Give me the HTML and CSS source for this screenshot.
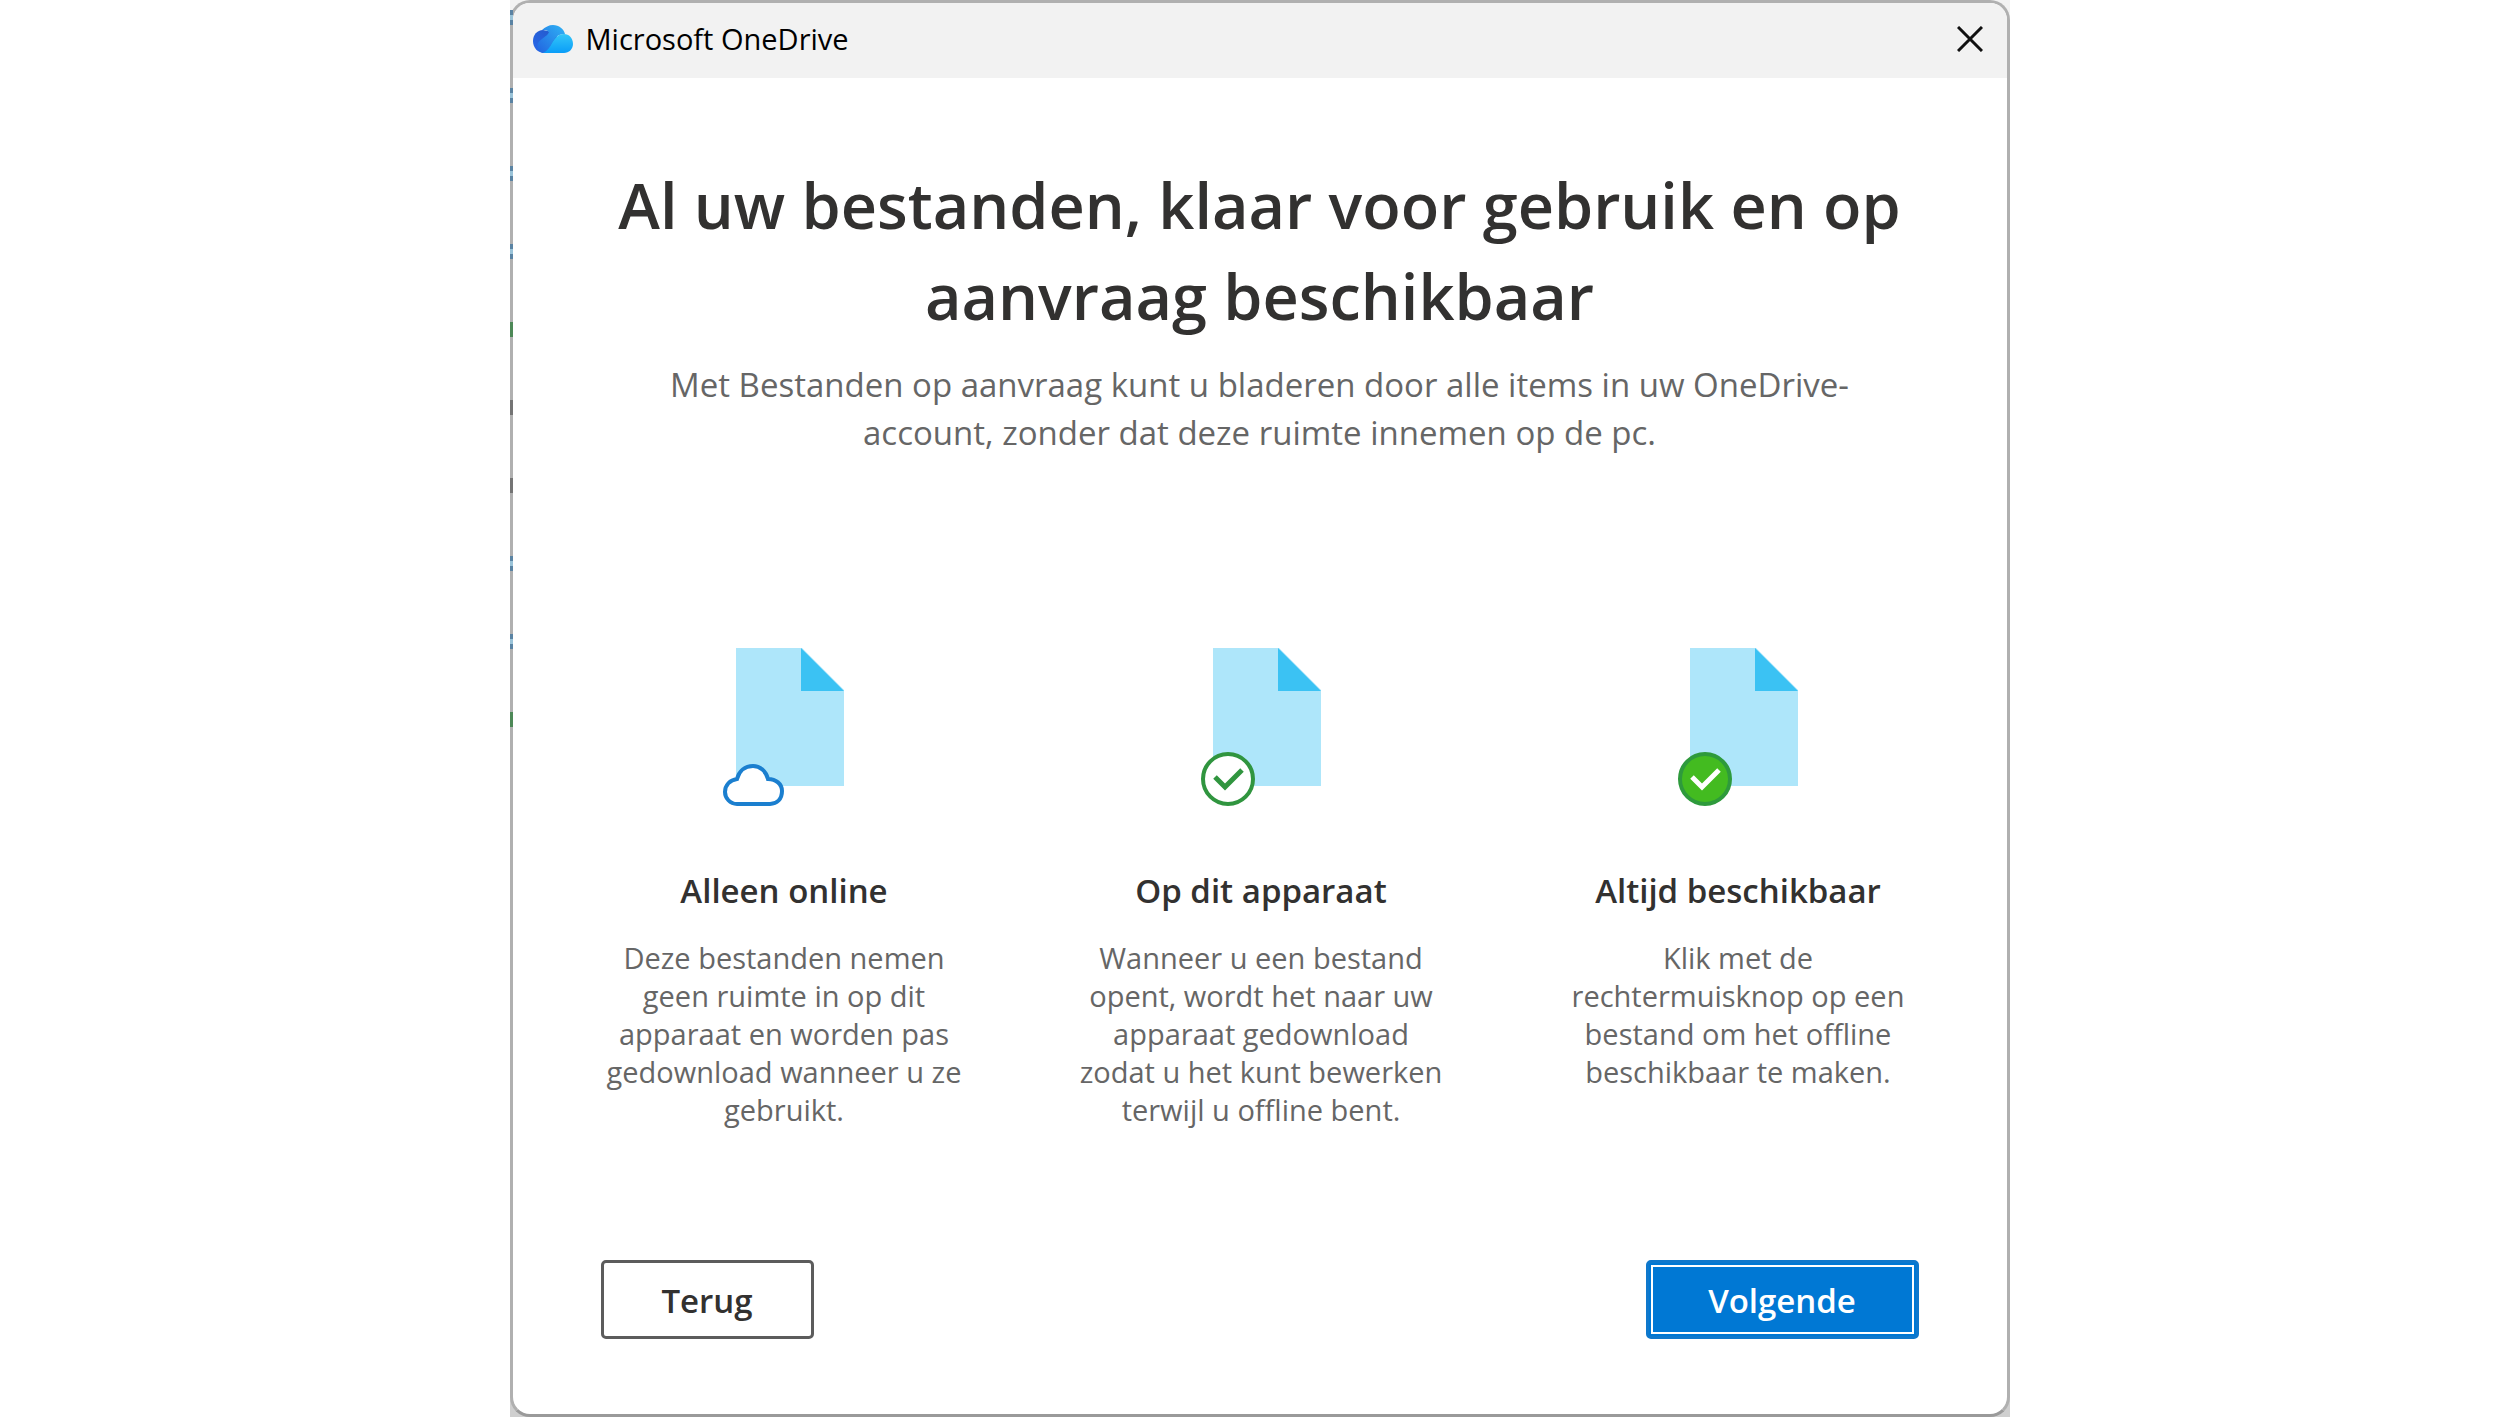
FILE: index.html
```html
<!DOCTYPE html>
<html lang="nl">
<head>
    <meta charset="UTF-8">
    <meta name="viewport" content="width=device-width, initial-scale=1.0">
    <title>Microsoft OneDrive</title>
    <link rel="stylesheet" href="styles.css">
</head>
<body>

    <div class="frame">
        <div class="window">
            <header class="titlebar">
                <svg class="logo" viewBox="0 0 40 28">
                    <defs>
                        <linearGradient id="back" x1="1" y1="0" x2="0" y2="1">
                            <stop offset="0" stop-color="#2fb4f5"/>
                            <stop offset="1" stop-color="#2263e0"/>
                        </linearGradient>
                        <linearGradient id="left" x1="1" y1="0" x2="0" y2="1">
                            <stop offset="0" stop-color="#2458c8"/>
                            <stop offset="1" stop-color="#2868ea"/>
                        </linearGradient>
                        <linearGradient id="front" x1="0" y1="0" x2="0" y2="1">
                            <stop offset="0" stop-color="#34c6f8"/>
                            <stop offset="1" stop-color="#0a9df8"/>
                        </linearGradient>
                    </defs>
                    <path fill="url(#left)" d="M10 5C4 5 0 10 0 16c0 7 5 12 11 12h12L24 8z"/>
                    <path fill="url(#back)" d="M9 5C12 2 16 0 20 0c6 0 11 4 12 9-8 0-10 4-13 9-2 4-5 8-9 10C5 26 3 22 5 18c3-5 9-6 11-11-2-2-5-2-7-2z"/>
                    <path fill="url(#front)" d="M10 28c4-2 7-6 9-10 3-5 6-9 12-9 5 0 9 4 9 10 0 5-4 9-9 9z"/>
                </svg>
                <span class="app-name">Microsoft OneDrive</span>
                <button class="close" aria-label="Sluiten">
                    <svg viewBox="0 0 26 26">
                        <path d="M1 1l24 24M25 1L1 25" fill="none" stroke="#111" stroke-width="3"/>
                    </svg>
                </button>
            </header>

            <main>
                <h1>Al uw bestanden, klaar voor gebruik en op<br>aanvraag beschikbaar</h1>
                <p class="intro">Met Bestanden op aanvraag kunt u bladeren door alle items in uw OneDrive-<br>account, zonder dat deze ruimte innemen op de pc.</p>

                <div class="options">
                    <section class="option">
                        <svg class="file" viewBox="0 0 124 162">
                            <path fill="#aee6fa" d="M14 2h66l42 42v96H14z"/>
                            <path fill="#3bc2f3" d="M79 2v43h43z"/>
                            <path fill="#fff" stroke="#1b7fcf" stroke-width="4" d="M15 158C8 158 3 152 3 146c0-7 5-12 12-13C17 125 23 120 31 120c7 0 13 5 15 13 8 0 14 5 14 12 0 8-5 13-12 13z"/>
                        </svg>
                        <h2>Alleen online</h2>
                        <p>Deze bestanden nemen<br>geen ruimte in op dit<br>apparaat en worden pas<br>gedownload wanneer u ze<br>gebruikt.</p>
                    </section>
                    <section class="option">
                        <svg class="file" viewBox="0 0 124 162">
                            <path fill="#aee6fa" d="M14 2h66l42 42v96H14z"/>
                            <path fill="#3bc2f3" d="M79 2v43h43z"/>
                            <circle cx="29" cy="133" r="25" fill="#fff" stroke="#30953f" stroke-width="4"/>
                            <path fill="none" stroke="#30953f" stroke-width="5" d="M16 131l10 10 17-17"/>
                        </svg>
                        <h2>Op dit apparaat</h2>
                        <p>Wanneer u een bestand<br>opent, wordt het naar uw<br>apparaat gedownload<br>zodat u het kunt bewerken<br>terwijl u offline bent.</p>
                    </section>
                    <section class="option">
                        <svg class="file" viewBox="0 0 124 162">
                            <path fill="#aee6fa" d="M14 2h66l42 42v96H14z"/>
                            <path fill="#3bc2f3" d="M79 2v43h43z"/>
                            <circle cx="29" cy="133" r="25" fill="#43bb20" stroke="#2e9a3c" stroke-width="4"/>
                            <path fill="none" stroke="#fff" stroke-width="5" d="M16 131l10 10 17-17"/>
                        </svg>
                        <h2>Altijd beschikbaar</h2>
                        <p>Klik met de<br>rechtermuisknop op een<br>bestand om het offline<br>beschikbaar te maken.</p>
                    </section>
                </div>
            </main>

            <footer>
                <button class="btn">Terug</button>
                <button class="btn primary">Volgende</button>
            </footer>
        </div>

        <!-- status icons of the list behind the window -->
        <div class="marks">
            <i class="blue"></i>
            <i class="blue"></i>
            <i class="blue"></i>
            <i class="blue"></i>
            <i class="green"></i>
            <i class="grey"></i>
            <i class="grey"></i>
            <i class="blue"></i>
            <i class="blue"></i>
            <i class="green"></i>
        </div>
    </div>

</body>
</html>
```
FILE: styles.css
```css
* {
    box-sizing: border-box;
}
body {
    margin: 0;
    background: #fff;
    color: #323130;
    font-family: 'Open Sans', 'Noto Sans', sans-serif;
}
.frame {
    position: relative;
    max-width: 1500px;
    min-height: 100vh;
    margin: 0 auto;
    display: flex;
    background: linear-gradient(#f2f2f2 50%, #cfcfcf 50%);
}
.window {
    flex: 1;
    display: flex;
    flex-direction: column;
    background: #fff;
    border: 3px solid #b0b0b0;
    border-bottom-color: #9a9a9a;
    border-radius: 20px;
    overflow: hidden;
}
.titlebar {
    display: flex;
    align-items: center;
    height: 75px;
    padding: 0 24px 4px 20px;
    background: #f2f2f2;
}
.logo {
    width: 40px;
    height: 28px;
}
.app-name {
    flex: 1;
    margin-left: 13px;
    color: #000;
    font-size: 29px;
}
.close {
    display: flex;
    padding: 0;
    border: none;
    background: none;
    cursor: pointer;
}
.close svg {
    width: 26px;
    height: 26px;
}
main {
    flex: 1;
    padding: 81px 30px 0;
    text-align: center;
}
h1 {
    margin: 0;
    font-size: 63px;
    font-weight: 600;
    line-height: 91px;
}
.intro {
    margin: 20px 0 0;
    color: #666;
    font-size: 33px;
    line-height: 48px;
}
.options {
    display: grid;
    grid-template-columns: repeat(3, 1fr);
    margin-top: 189px;
    padding-left: 3px;
}
.file {
    display: block;
    width: 124px;
    height: 162px;
    margin: 0 auto;
}
h2 {
    margin: 59px 0 0;
    font-size: 33px;
    font-weight: 600;
    line-height: 48px;
}
.option p {
    margin: 24px 0 0;
    color: #666;
    font-size: 29px;
    line-height: 38px;
}
footer {
    display: flex;
    justify-content: space-between;
    padding: 0 88px 75px;
}
.btn {
    min-width: 213px;
    height: 79px;
    padding: 2px 56px 0;
    border: 3px solid #5c5c5c;
    border-radius: 5px;
    background: #fff;
    color: #323130;
    font-family: inherit;
    font-size: 33px;
    font-weight: 600;
    cursor: pointer;
}
.primary {
    min-width: 273px;
    border-color: #0f78cc;
    background: #0078d4;
    color: #fff;
    outline: 2px solid #fff;
    outline-offset: -7px;
}
.marks {
    position: absolute;
    top: 10px;
    left: 0;
    display: flex;
    flex-direction: column;
    gap: 63px;
}
.marks i {
    width: 3px;
    height: 15px;
}
.marks .blue {
    border: solid #5a83a3;
    border-width: 5px 0;
    background: #9ac3d8;
}
.marks .green {
    background: #4d8857;
}
.marks .grey {
    background: #747474;
}
```
